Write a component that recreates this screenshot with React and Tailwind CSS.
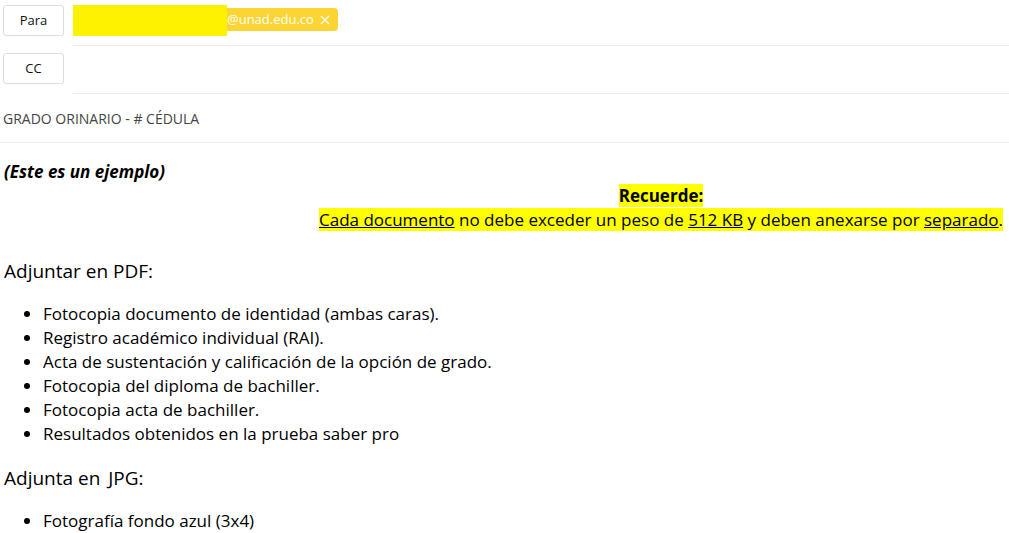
export default function App() {
  const items = [
    "Fotocopia documento de identidad (ambas caras).",
    "Registro académico individual (RAI).",
    "Acta de sustentación y calificación de la opción de grado.",
    "Fotocopia del diploma de bachiller.",
    "Fotocopia acta de bachiller.",
    "Resultados obtenidos en la prueba saber pro",
  ];
  return (
    <div className="w-[1009px] h-[533px] overflow-hidden bg-white text-black" style={{ fontFamily: '"Open Sans", "Noto Sans", sans-serif' }}>
      {/* Para row */}
      <div className="flex items-stretch h-[46px]">
        <div className="pl-[3px] pt-[5px]">
          <button className="w-[61px] h-[31px] border border-[#dcdcdc] rounded-[3px] text-[13px] text-[#111] bg-white">Para</button>
        </div>
        <div className="ml-[9px] flex-1 border-b border-[#ececec] flex items-start pt-[5px]">
          <div className="w-[154px] h-[31px] bg-[#fff200]"></div>
          <div className="mt-[3px] h-[23px] bg-[#fcd434] rounded-r-[4px] flex items-center pr-[8px] text-white text-[13px]">
            <span>@unad.edu.co</span>
            <svg className="ml-[6px]" width="10" height="10" viewBox="0 0 10 10" fill="none" stroke="white" strokeWidth="1.2">
              <path d="M1 1 L9 9 M9 1 L1 9" />
            </svg>
          </div>
        </div>
      </div>
      {/* CC row */}
      <div className="flex items-stretch h-[48px]">
        <div className="pl-[3px] pt-[7px]">
          <button className="w-[61px] h-[31px] border border-[#dcdcdc] rounded-[3px] text-[13px] text-[#111] bg-white">CC</button>
        </div>
        <div className="ml-[9px] flex-1 border-b border-[#ececec]"></div>
      </div>
      {/* Subject */}
      <div className="h-[49px] border-b border-[#ececec] flex items-center pl-[3px] text-[14px] text-[#444]">
        GRADO ORINARIO - # CÉDULA
      </div>
      {/* Body */}
      <div className="pl-[4px] pr-[6px]">
        <div className="mt-[17px] text-[17px] font-bold italic leading-[24px]">(Este es un ejemplo)</div>
        <div className="flex justify-end">
          <div className="text-center text-[17px] leading-[24px]">
            <div><span className="bg-[#ffff00] font-bold">Recuerde:</span></div>
            <div>
              <span className="bg-[#ffff00]"><u>Cada documento</u> no debe exceder un peso de <u>512 KB</u> y deben anexarse por <u>separado</u>.</span>
            </div>
          </div>
        </div>
        <div className="mt-[26px] text-[19px] leading-[26px]">Adjuntar en PDF:</div>
        <ul className="mt-[18px] list-disc pl-[39px] text-[17px] leading-[24px]">
          {items.map((t) => (
            <li key={t}>{t}</li>
          ))}
        </ul>
        <div className="mt-[19px] text-[19px] leading-[26px]">Adjunta en <span className="ml-[3px]">JPG:</span></div>
        <ul className="mt-[18px] list-disc pl-[39px] text-[17px] leading-[24px]">
          <li>Fotografía fondo azul (3x4)</li>
        </ul>
      </div>
    </div>
  );
}
